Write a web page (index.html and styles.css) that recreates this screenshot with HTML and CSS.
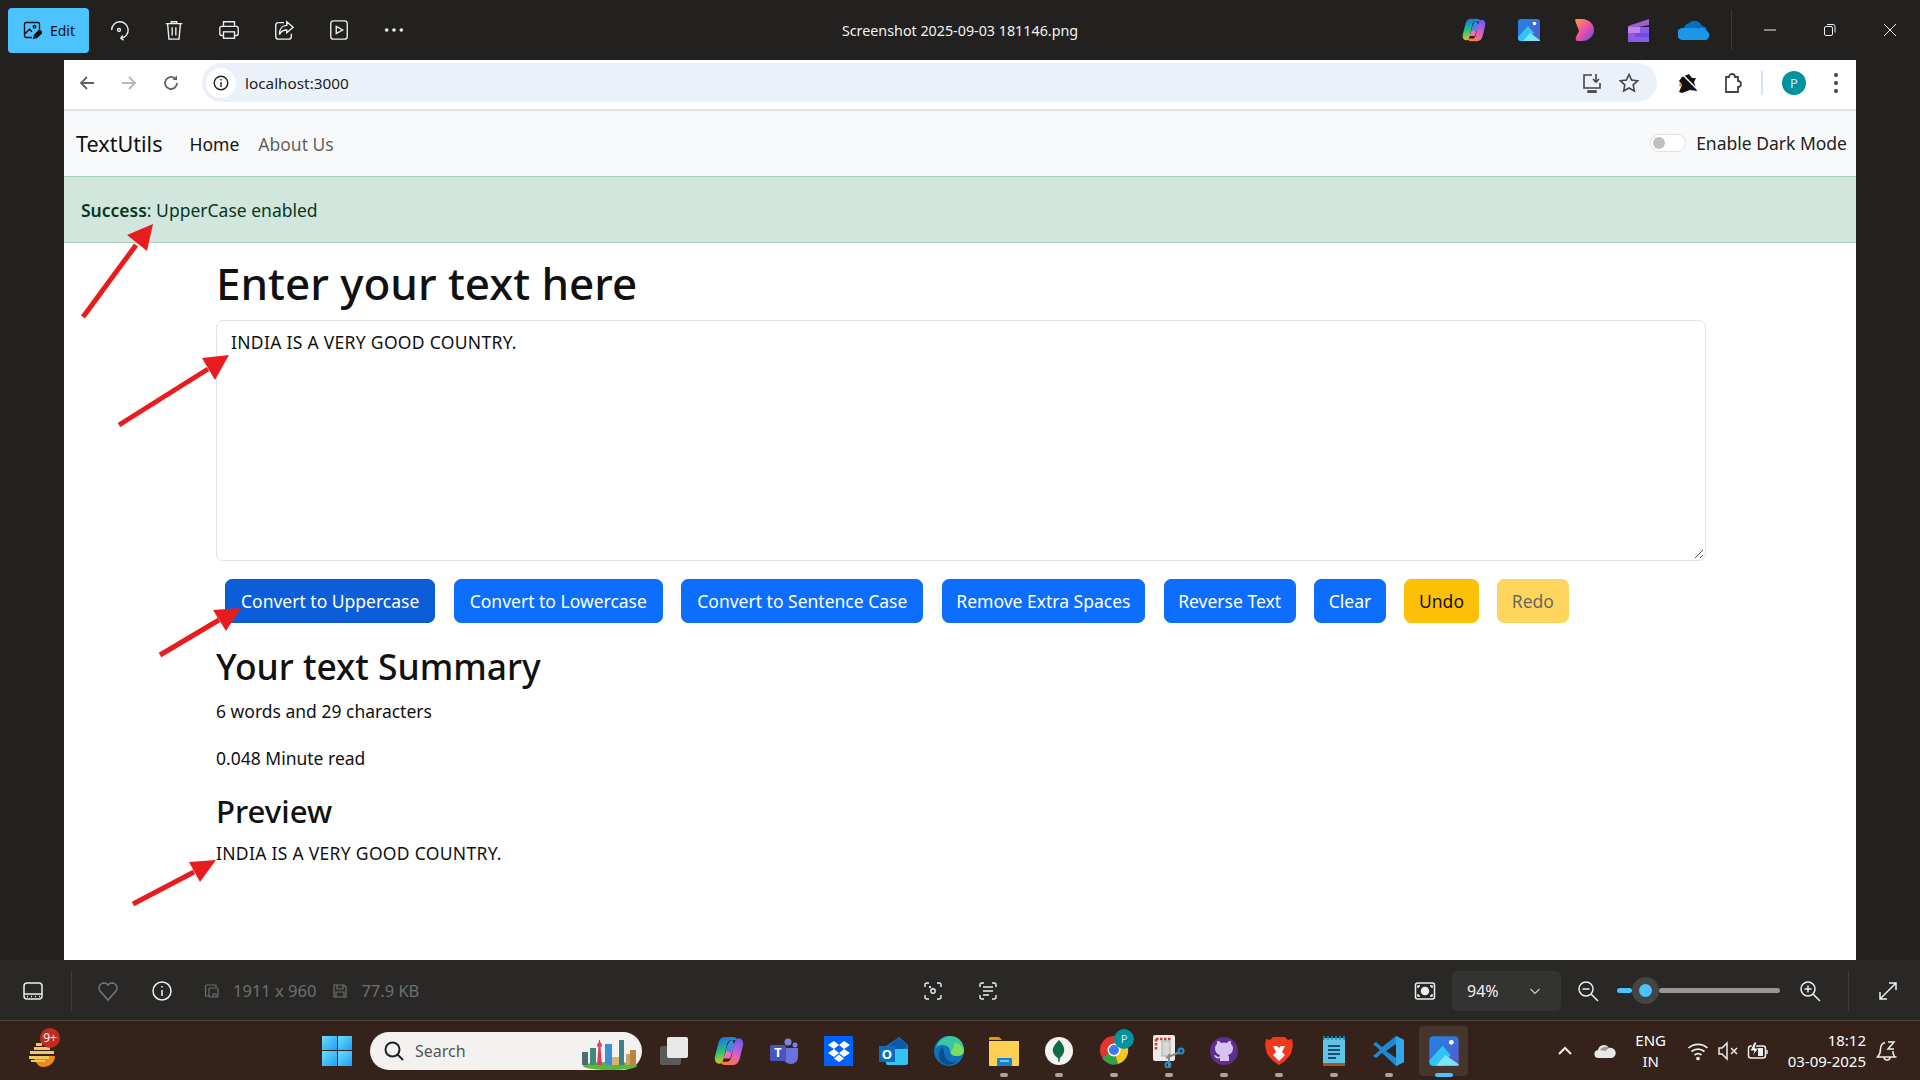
FILE: index.html
```html
<!DOCTYPE html>
<html>

<head>
    <link rel="stylesheet" href="styles.css">
    <title>TextUtils screenshot</title>
</head>

<body>
    <!-- shared icons -->
    <svg class="defs" width="0" height="0">
        <defs>
            <linearGradient id="copilotA" x1="0.3" y1="0" x2="0.5" y2="1">
                <stop offset="0" stop-color="#1b6ff0" />
                <stop offset="0.5" stop-color="#22c27a" />
                <stop offset="1" stop-color="#f7c21a" />
            </linearGradient>
            <linearGradient id="copilotB" x1="0.7" y1="0" x2="0.3" y2="1">
                <stop offset="0" stop-color="#6a5cf0" />
                <stop offset="0.5" stop-color="#d95cd0" />
                <stop offset="1" stop-color="#ff7a3c" />
            </linearGradient>
            <linearGradient id="photoBg" x1="0" y1="0" x2="1" y2="1">
                <stop offset="0" stop-color="#1f86e6" />
                <stop offset="1" stop-color="#5b57c9" />
            </linearGradient>
            <linearGradient id="clipG" x1="0" y1="0" x2="1" y2="1">
                <stop offset="0" stop-color="#ff9a3c" />
                <stop offset="0.5" stop-color="#ee4fa8" />
                <stop offset="1" stop-color="#5a50e8" />
            </linearGradient>
        </defs>
        <symbol id="copilot" viewBox="0 0 28 28">
            <path d="M10 1h8c2 0 3 1 4 3H16c-2 0-3 1-4 4L9 21c-.6 3-2 5-4 5-3 0-5-3-4-7L4 7c1-4 3-6 6-6z" fill="url(#copilotA)" />
            <path d="M18 27h-8c-2 0-3-1-4-3h6c2 0 3-1 4-4l3-13c.6-3 2-5 4-5 3 0 5 3 4 7l-3 12c-1 4-3 6-6 6z" fill="url(#copilotB)" />
            <path d="M13 8h6l-4 13H9z" fill="#f26fb0" />
            <path d="M13 8c1-3 2-4 4-4l2 4-3 8-5-3z" fill="#3a8ae8" />
        </symbol>
        <symbol id="photos" viewBox="0 0 24 24">
            <rect x="1" y="1" width="22" height="22" rx="3" fill="url(#photoBg)" />
            <circle cx="17.500" cy="5.500" r="1.800" fill="#fff" />
            <path d="M1 19 11 8l6 7-6 8H4a3 3 0 0 1-3-3z" fill="#30c5f5" />
            <path d="M6 23l7-8 10 7v1z" fill="#7be3fb" />
        </symbol>
        <symbol id="cloud" viewBox="0 0 32 22">
            <path d="M11 4a8 8 0 0 1 13 3 6 6 0 0 1 5 3l-12 7-11-4a7 7 0 0 1 5-9z" fill="#0b6cc4" />
            <path d="M6 9a6 6 0 0 0-2 12h21a5 5 0 0 0 4-9 6 6 0 0 0-9-2 7 7 0 0 0-6-1c-3 0-6 0-8 0z" fill="#1e96e8" />
        </symbol>
    </svg>

    <div class="window">
        <!-- photos app title bar -->
        <header class="topbar">
            <div class="topbar-left">
                <button class="edit-btn">
                    <svg class="ico20" viewBox="0 0 24 24" fill="none" stroke="#111" stroke-width="1.600">
                        <path d="M12 21H5a2 2 0 0 1-2-2V5a2 2 0 0 1 2-2h14a2 2 0 0 1 2 2v6" />
                        <circle cx="15" cy="8" r="1.500" />
                        <path d="M3 17l6-6 3 3" />
                        <path d="M14 22l1-4 6-6 3 3-6 6z" fill="#111" />
                    </svg>
                    Edit
                </button>
                <span class="tool first">
                    <svg class="ico22" viewBox="0 0 24 24" fill="none" stroke="#eee" stroke-width="1.500">
                        <path d="M4 12a9 9 0 1 1 10 9" />
                        <path d="M17 23l-3-2 2-3" />
                        <circle cx="12" cy="12" r="1.600" />
                    </svg>
                </span>
                <span class="tool">
                    <svg class="ico22" viewBox="0 0 24 24" fill="none" stroke="#eee" stroke-width="1.500">
                        <path d="M3 5h18M9 5V3h6v2M5 5l1.500 17h11L19 5M10 9v9M14 9v9" />
                    </svg>
                </span>
                <span class="tool">
                    <svg class="ico22" viewBox="0 0 24 24" fill="none" stroke="#eee" stroke-width="1.500">
                        <path d="M6 8V3h12v5M6 18H4a2 2 0 0 1-2-2v-6a2 2 0 0 1 2-2h16a2 2 0 0 1 2 2v6a2 2 0 0 1-2 2h-2" />
                        <rect x="6" y="14" width="12" height="7" />
                    </svg>
                </span>
                <span class="tool">
                    <svg class="ico22" viewBox="0 0 24 24" fill="none" stroke="#eee" stroke-width="1.500">
                        <path d="M12 4H6a3 3 0 0 0-3 3v12a3 3 0 0 0 3 3h11a3 3 0 0 0 3-3v-3" />
                        <path d="M15 3l7 6-7 6v-3c-4 0-6 1-8 5 0-6 3-10 8-10z" />
                    </svg>
                </span>
                <span class="tool">
                    <svg class="ico22" viewBox="0 0 24 24" fill="none" stroke="#eee" stroke-width="1.500">
                        <rect x="3" y="2" width="18" height="20" rx="3" />
                        <path d="M9 8l7 4-7 4z" />
                    </svg>
                </span>
                <span class="tool">
                    <svg class="ico22" viewBox="0 0 24 24" fill="#eee">
                        <circle cx="4" cy="12" r="2" />
                        <circle cx="12" cy="12" r="2" />
                        <circle cx="20" cy="12" r="2" />
                    </svg>
                </span>
            </div>
            <div class="file-title">Screenshot 2025-09-03 181146.png</div>
            <div class="topbar-right">
                <span class="app"><svg class="ico24"><use href="#copilot" /></svg></span>
                <span class="app"><svg class="ico24"><use href="#photos" /></svg></span>
                <span class="app">
                    <svg class="ico24" viewBox="0 0 24 24">
                        <path d="M4 1h6c7 0 12 5 12 11s-5 11-12 11H6c-2 0-3-2-2-4l3-6-3-8C3 3 3 1 4 1z" fill="url(#clipG)" />
                    </svg>
                </span>
                <span class="app">
                    <svg class="ico24" viewBox="0 0 24 24">
                        <path d="M1 8 22 1v6L1 11z" fill="#9b5fd8" />
                        <rect x="1" y="9" width="21" height="15" fill="#8a5ae8" />
                        <rect x="1" y="9" width="12" height="6" fill="#c084e8" />
                        <rect x="8" y="15" width="14" height="4" fill="#6a4fe0" />
                    </svg>
                </span>
                <span class="app"><svg class="ico-cloud"><use href="#cloud" /></svg></span>
                <span class="bar-sep"></span>
                <span class="win-ctl">
                    <svg width="14" height="14" viewBox="0 0 14 14" stroke="#eee"><path d="M1 7h12" /></svg>
                </span>
                <span class="win-ctl">
                    <svg width="14" height="14" viewBox="0 0 14 14" fill="none" stroke="#eee"><rect x="1.500" y="3.500" width="8" height="9" rx="1.500" /><path d="M4 1.500h6a2 2 0 0 1 2 2v6" /></svg>
                </span>
                <span class="win-ctl">
                    <svg width="14" height="14" viewBox="0 0 14 14" stroke="#eee"><path d="M1 1l12 12M13 1 1 13" /></svg>
                </span>
            </div>
        </header>

        <main class="viewer">
            <div class="browser">
                <!-- chrome toolbar -->
                <div class="chrome-bar">
                    <span class="nav-ico">
                        <svg class="ico18" viewBox="0 0 18 18" fill="none" stroke="#5f6368" stroke-width="1.800"><path d="M16 9H3M9 3 3 9l6 6" /></svg>
                    </span>
                    <span class="nav-ico">
                        <svg class="ico18" viewBox="0 0 18 18" fill="none" stroke="#b4b6b9" stroke-width="1.800"><path d="M2 9h13M9 3l6 6-6 6" /></svg>
                    </span>
                    <span class="nav-ico">
                        <svg class="ico18" viewBox="0 0 18 18" fill="none" stroke="#5f6368" stroke-width="1.800"><path d="M15 9a6 6 0 1 1-2-4.500" /><path d="M15 1.500V6h-4.500z" fill="#5f6368" stroke="none" /></svg>
                    </span>
                    <div class="omnibox">
                        <span class="site-info">
                            <svg class="ico16" viewBox="0 0 16 16" fill="none" stroke="#222" stroke-width="1.400"><circle cx="8" cy="8" r="6.800" /><path d="M8 7v5M8 4v1.500" /></svg>
                        </span>
                        <span class="url">localhost:3000</span>
                        <span class="omni-right">
                            <svg class="ico22" viewBox="0 0 22 22" fill="none" stroke="#444" stroke-width="1.600"><path d="M11 3H3v13h16v-5M7 20h8" /><path d="M7 19h8v1H7z" /><path d="M15 2v8M12 7l3 3 3-3" /></svg>
                            <svg class="ico22" viewBox="0 0 22 22" fill="none" stroke="#444" stroke-width="1.600"><path d="m11 2.500 2.600 5.500 6 .8-4.400 4.100 1.100 6L11 16l-5.300 2.900 1.100-6L2.400 8.800l6-.8z" /></svg>
                        </span>
                    </div>
                    <span class="ext first-ext">
                        <svg class="ico24" viewBox="0 0 24 24"><path d="M5 6l7-3 3 4 4 0-2 4 3 9-7-1-8 3-3-1 3-7-3-4z" fill="#111" /><path d="M6 4 20 18" stroke="#fff" stroke-width="1.500" /><path d="M2 13l2-2 1 4-2 1z" fill="#f28c28" /></svg>
                    </span>
                    <span class="ext">
                        <svg class="ico22" viewBox="0 0 22 22" fill="none" stroke="#444" stroke-width="1.800"><path d="M5 5h3a3 3 0 0 1 6 0h3v4a3 3 0 0 1 0 6v5H5v-5-10z" /></svg>
                    </span>
                    <span class="chrome-sep"></span>
                    <span class="avatar">P</span>
                    <span class="kebab"><i></i><i></i><i></i></span>
                </div>

                <nav class="navbar">
                    <span class="brand">TextUtils</span>
                    <a class="nav-link active">Home</a>
                    <a class="nav-link">About Us</a>
                    <div class="dark-toggle">
                        <span class="switch"><i></i></span>
                        <span>Enable Dark Mode</span>
                    </div>
                </nav>

                <div class="alert"><strong>Success</strong>: UpperCase enabled</div>

                <section class="container">
                    <h1>Enter your text here</h1>
                    <div class="textbox">
                        <span class="upper">INDIA IS A VERY GOOD COUNTRY.</span>
                        <svg class="grip" width="10" height="10" viewBox="0 0 10 10" stroke="#555"><path d="M1 9 9 1M6 9l3-3" /></svg>
                    </div>
                    <div class="btn-row">
                        <button class="btn btn-hover">Convert to Uppercase</button>
                        <button class="btn">Convert to Lowercase</button>
                        <button class="btn">Convert to Sentence Case</button>
                        <button class="btn tight">Remove Extra Spaces</button>
                        <button class="btn tight">Reverse Text</button>
                        <button class="btn tight">Clear</button>
                        <button class="btn btn-warn tight">Undo</button>
                        <button class="btn btn-warn off tight">Redo</button>
                    </div>
                    <h2>Your text Summary</h2>
                    <p class="stat">6 words and 29 characters</p>
                    <p class="stat read">0.048 Minute read</p>
                    <h3>Preview</h3>
                    <p class="stat upper">INDIA IS A VERY GOOD COUNTRY.</p>
                </section>
            </div>
        </main>

        <!-- photos app status bar -->
        <footer class="infobar">
            <div class="info-left">
                <svg class="ico22 film" viewBox="0 0 22 22" fill="none" stroke="#eee" stroke-width="1.500"><rect x="2" y="3" width="18" height="16" rx="3" /><path d="M2 14h18M5 16.500h1M9 16.500h1M13 16.500h1M17 16.500h1" /></svg>
                <span class="info-sep"></span>
                <svg class="ico22 heart" viewBox="0 0 22 22" fill="none" stroke="#777" stroke-width="1.500"><path d="M11 20 3 11a5 5 0 0 1 8-6 5 5 0 0 1 8 6z" /></svg>
                <svg class="ico22 about" viewBox="0 0 22 22" fill="none" stroke="#eee" stroke-width="1.500"><circle cx="11" cy="11" r="9" /><path d="M11 10v6M11 6v1.500" /></svg>
                <svg class="ico16 dim-ico" viewBox="0 0 16 16" fill="none" stroke="#6f6f6f" stroke-width="1.200"><path d="M12 4V2H3a1.500 1.500 0 0 0-1.500 1.500V13H6" /><rect x="5" y="5" width="9" height="9" rx="1" /><path d="M9 14v-3h3v3" /></svg>
                <span class="meta">1911 x 960</span>
                <svg class="ico16 disk-ico" viewBox="0 0 16 16" fill="none" stroke="#6f6f6f" stroke-width="1.200"><path d="M2 2h10l2 2v10H2z" /><path d="M5 2v4h6V2M4 14V9h8v5" /></svg>
                <span class="meta">77.9 KB</span>
            </div>
            <div class="info-mid">
                <svg class="ico22" viewBox="0 0 22 22" fill="none" stroke="#eee" stroke-width="1.400"><path d="M3 7V5a2 2 0 0 1 2-2h2M15 3h2a2 2 0 0 1 2 2v2M19 15v2a2 2 0 0 1-2 2h-2M7 19H5a2 2 0 0 1-2-2v-2" /><circle cx="11" cy="11" r="2.200" /><path d="M7 7h2M8 6v2" /></svg>
                <svg class="ico22" viewBox="0 0 22 22" fill="none" stroke="#eee" stroke-width="1.400"><path d="M3 7V5a2 2 0 0 1 2-2h2M15 3h2a2 2 0 0 1 2 2v2M19 15v2a2 2 0 0 1-2 2h-2M7 19H5a2 2 0 0 1-2-2v-2" /><path d="M6 7h10M6 11h10M6 15h6" /></svg>
            </div>
            <div class="info-right">
                <svg class="ico22" viewBox="0 0 22 22" fill="none" stroke="#eee" stroke-width="1.500"><rect x="1.500" y="3" width="19" height="16" rx="2" /><circle cx="11" cy="11" r="3.500" fill="#eee" /><path d="M4 8V6h2M16 6h2v2M18 14v2h-2M6 16H4v-2" /></svg>
                <div class="zoom-pick">94%
                    <svg width="12" height="12" viewBox="0 0 12 12" fill="none" stroke="#ccc" stroke-width="1.200"><path d="M1.500 4 6 8.500 10.500 4" /></svg>
                </div>
                <svg class="ico22" viewBox="0 0 22 22" fill="none" stroke="#eee" stroke-width="1.500"><circle cx="9" cy="9" r="7" /><path d="M14 14l7 7M5.500 9h7" /></svg>
                <div class="slider"><span class="fill"></span><span class="knob"><i></i></span><span class="rest"></span></div>
                <svg class="ico22" viewBox="0 0 22 22" fill="none" stroke="#eee" stroke-width="1.500"><circle cx="9" cy="9" r="7" /><path d="M14 14l7 7M5.500 9h7M9 5.500v7" /></svg>
                <span class="info-sep wide"></span>
                <svg class="ico22 expand" viewBox="0 0 22 22" fill="none" stroke="#eee" stroke-width="1.500"><path d="M3 19 19 3M12 3h7v7M3 12v7h7" /></svg>
            </div>
        </footer>

        <div class="taskbar">
            <span class="widget">
                <svg width="34" height="34" viewBox="0 0 34 34">
                    <path d="M9 22h22c0 7-6 11-12 11-5 0-8-5-10-11z" fill="#f08a16" />
                    <path d="M10 13h16v3H10zM6 17h24v3H6zM5 22h20v3H5zM7 26h14v2H7zM12 9h6v3h-6z" fill="#f4c765" />
                </svg>
                <b class="badge">9+</b>
            </span>
            <span class="start">
                <i></i><i></i><i></i><i></i>
            </span>
            <div class="search">
                <svg class="ico22" viewBox="0 0 22 22" fill="none" stroke="#222" stroke-width="2"><circle cx="9.500" cy="9.500" r="7" /><path d="M14.500 14.500 20 20" /></svg>
                <span>Search</span>
                <svg class="skyline" width="58" height="38" viewBox="0 0 58 38">
                    <ellipse cx="30" cy="34" rx="27" ry="4" fill="#5ab738" />
                    <rect x="2" y="20" width="6" height="13" fill="#4d6b78" />
                    <rect x="10" y="16" width="6" height="17" fill="#3e8b78" />
                    <path d="M17 33 19 8h1l2 25z" fill="#d33f6b" />
                    <circle cx="19.500" cy="13" r="2.500" fill="#e0457a" />
                    <rect x="25" y="12" width="7" height="21" fill="#3c8fd8" />
                    <rect x="32" y="25" width="7" height="8" fill="#d8b36a" />
                    <rect x="39" y="8" width="5" height="25" fill="#3e7f8a" />
                    <rect x="46" y="22" width="4" height="11" fill="#c9a36c" />
                    <rect x="50" y="18" width="6" height="15" fill="#b8863c" />
                </svg>
            </div>
            <div class="dock">
                <span class="dock-item">
                    <svg class="ico30" viewBox="0 0 30 30">
                        <rect x="1" y="10" width="21" height="19" rx="2" fill="#5a5a5a" />
                        <rect x="8" y="1" width="21" height="21" rx="2" fill="#e8e8e8" />
                    </svg>
                </span>
                <span class="dock-item"><svg class="ico30"><use href="#copilot" /></svg></span>
                <span class="dock-item">
                    <svg class="ico30" viewBox="0 0 30 30">
                        <circle cx="19" cy="6" r="3.500" fill="#7b83eb" />
                        <circle cx="26" cy="9" r="2.500" fill="#7b83eb" />
                        <path d="M14 12h15v9c0 4-3 7-7 7s-8-3-8-7z" fill="#6b72dd" />
                        <rect x="1" y="9" width="16" height="16" rx="1.500" fill="#4b53bc" />
                        <text class="tile-t" x="9" y="21">T</text>
                    </svg>
                </span>
                <span class="dock-item">
                    <span class="dropbox">
                        <svg width="24" height="24" viewBox="0 0 24 24" fill="#fff">
                            <path d="M7 2 1 6l6 4 5-4zM17 2l-5 4 5 4 6-4zM1 14l6 4 5-4-5-4zM17 10l-5 4 5 4 6-4zM7 19.500l5 3.500 5-3.500-5-4z" />
                        </svg>
                    </span>
                </span>
                <span class="dock-item">
                    <svg class="ico30" viewBox="0 0 30 30">
                        <path d="M7 10 20 1l9 8v5L12 26z" fill="#1173c9" />
                        <path d="M19 2l10 8-10 6-9-6z" fill="#0a5aa8" />
                        <path d="M5 13h24v14a2 2 0 0 1-2 2H9a2 2 0 0 1-2-2z" fill="#33c4f2" />
                        <rect x="0" y="10" width="16" height="16" fill="#0f6cbd" />
                        <text class="tile-t" x="8" y="23">O</text>
                    </svg>
                </span>
                <span class="dock-item">
                    <svg class="ico32" viewBox="0 0 32 32">
                        <circle cx="16" cy="16" r="15" fill="#0f71bd" />
                        <path d="M3 13C5 5 11 1 17 1c8 0 14 6 14 14 0 4-3 6-7 6-5 0-7-2-7-5 0-4-4-6-8-6-3 0-5 1-6 3z" fill="#3ac5a3" />
                        <path d="M22 7c6 2 9 7 9 9 0 3-3 5-7 5-4 0-6-2-6-4 2-3 3-6 4-10z" fill="#7cdb60" />
                        <path d="M11 17c0 7 6 12 13 9-4 4-10 5-14 2C5 25 4 17 9 12c1 1 2 3 2 5z" fill="#0a4f8c" />
                    </svg>
                </span>
                <span class="dock-item running">
                    <svg class="ico32" viewBox="0 0 32 32">
                        <path d="M1 3a1 1 0 0 1 1-1h9l3 3h-13z" fill="#d99a06" />
                        <path d="M1 6h30v24a1 1 0 0 1-1 1H2a1 1 0 0 1-1-1z" fill="#fcd053" />
                        <rect x="9" y="23" width="15" height="8" rx="1" fill="#1b7fd0" />
                        <path d="M12 26h9" stroke="#9ad7ff" stroke-width="1.500" />
                    </svg>
                </span>
                <span class="dock-item running">
                    <svg class="ico30" viewBox="0 0 30 30">
                        <circle cx="15" cy="15" r="14" fill="#f4f3ef" />
                        <path d="M15 4c4 4 6 8 5 12-1 3-3 5-4 6l-.5 4h-1L14 22c-2-1-4-3-5-6-1-4 2-8 6-12z" fill="#0f6a4a" />
                    </svg>
                </span>
                <span class="dock-item running">
                    <svg class="ico32" viewBox="-2 3 32 32">
                        <circle cx="14" cy="18" r="14" fill="#e0362c" />
                        <path d="M14 18 2 26a14 14 0 0 0 16 6z" fill="#2fa24a" />
                        <path d="M14 18l4 14a14 14 0 0 0 8-21H14z" fill="#f8c51c" />
                        <circle cx="14" cy="18" r="6.500" fill="#fff" />
                        <circle cx="14" cy="18" r="5" fill="#3b7ce8" />
                    </svg>
                    <span class="chrome-badge">P</span>
                </span>
                <span class="dock-item running">
                    <svg class="ico34" viewBox="0 0 34 34">
                        <rect x="1" y="1" width="22" height="26" rx="2" fill="#ebebeb" />
                        <path d="M4 5h16M4 5v11" stroke="#cf3b24" stroke-width="2.500" stroke-dasharray="2.500 1.500" fill="none" />
                        <rect x="10" y="7" width="8" height="15" fill="#d8d8d8" stroke="#aaa" />
                        <path d="M17 20v13M14 24l14-6" stroke="#8a8a8a" stroke-width="2" />
                        <circle cx="29" cy="17" r="2.500" fill="none" stroke="#1e90d8" stroke-width="2" />
                        <circle cx="16" cy="31" r="2.500" fill="none" stroke="#1e90d8" stroke-width="2" />
                    </svg>
                </span>
                <span class="dock-item running">
                    <svg class="ico30" viewBox="0 0 30 30">
                        <circle cx="15" cy="15" r="14" fill="#5f2d91" />
                        <path d="M11 25v-3c-3 1-5 0-6-3 2 0 3 2 5 2l1-2c-3-1-5-3-5-7 0-2 1-3 2-4V5c1 0 3 0 4 2a10 10 0 0 1 6 0c1-2 3-2 4-2v3c1 1 2 2 2 4 0 4-2 6-5 7 1 1 1 2 1 3v3z" fill="#d9c2ef" />
                    </svg>
                </span>
                <span class="dock-item running">
                    <svg class="ico30" viewBox="0 0 30 30">
                        <path d="M9 1h12l3 3 4-1 1 6-2 9-6 7-6 4-6-4-6-7-2-9 1-6 4 1z" fill="#f1391f" />
                        <path d="M9 10h4l2 2 2-2h4l-3 6 3 3-6 6-6-6 3-3z" fill="#fff" />
                    </svg>
                </span>
                <span class="dock-item running">
                    <svg class="ico32" viewBox="0 0 32 32">
                        <rect x="5" y="3" width="22" height="27" rx="2" fill="#5fc3e8" />
                        <rect x="5" y="28" width="22" height="3" fill="#a8541e" />
                        <path d="M6 1v4M10 1v4M14 1v4M18 1v4M22 1v4M26 1v4" stroke="#1f8ec4" stroke-width="1.500" />
                        <path d="M10 11h12M10 15h12M10 19h12M10 23h8" stroke="#14506e" stroke-width="2" />
                    </svg>
                </span>
                <span class="dock-item running">
                    <svg class="ico32" viewBox="0 0 32 32">
                        <path d="M23 1l8 4v22l-8 4-14-13-6 5-3-2 7-6-7-6 3-2 6 5z" fill="#1b8ad3" />
                        <path d="M23 1l8 4v22l-8 4z" fill="#31a8ec" />
                        <path d="M23 9 13 16l10 7z" fill="#35221a" />
                    </svg>
                </span>
                <span class="dock-item current">
                    <svg class="ico32"><use href="#photos" /></svg>
                </span>
            </div>
            <div class="tray">
                <svg class="chev" width="16" height="16" viewBox="0 0 16 16" fill="none" stroke="#eee" stroke-width="2"><path d="m2 11 6-6 6 6" /></svg>
                <svg class="tray-cloud" width="22" height="16" viewBox="0 0 22 16"><path d="M5 15a4 4 0 0 1-1-8 6 6 0 0 1 11-2 5 5 0 0 1 3 10z" fill="#e8e8e8" /><path d="M6 7a6 6 0 0 1 9-2l-4 3z" fill="#999" /></svg>
                <div class="lang">ENG<br>IN</div>
                <svg class="ico22 wifi" viewBox="0 0 22 22" fill="none" stroke="#eee" stroke-width="1.700"><path d="M1.500 8a14 14 0 0 1 19 0M4.500 11.500a10 10 0 0 1 13 0M7.500 15a5.500 5.500 0 0 1 7 0" /><circle cx="11" cy="18.500" r="1" fill="#eee" /></svg>
                <svg class="ico22 mute" viewBox="0 0 22 22" fill="none" stroke="#eee" stroke-width="1.500"><path d="M2 8v6h3l5 5V3L5 8zM14 8l6 6M20 8l-6 6" /></svg>
                <svg class="ico22 batt" viewBox="0 0 22 22" fill="none" stroke="#eee" stroke-width="1.500"><rect x="1.500" y="6" width="17" height="12" rx="2.500" /><path d="M20 10v4" /><path d="M7 2 3 11h4l-2 6 7-9H8l2-6z" fill="#eee" stroke="#35221a" stroke-width="1" /><rect x="11" y="8" width="5" height="8" fill="#eee" stroke="none" /></svg>
                <div class="clock">18:12<br>03-09-2025</div>
                <svg class="ico22 bell" viewBox="0 0 22 22" fill="none" stroke="#eee" stroke-width="1.500"><path d="M9 2.500C6 3.500 4.500 6 4.500 9c0 3-1 6-3 8h19M8 17a3 3 0 0 0 6 0M17 11v2l1.500 4" /><path d="M12 2h6l-6 7h6" /></svg>
            </div>
        </div>
    </div>

    <!-- red arrows drawn on top of the screenshot -->
    <svg class="arrows" width="1920" height="1080" viewBox="0 0 1920 1080">
        <g class="arrow">
            <path d="M83 317 136 245" />
            <polygon points="153,224 127,235 147,251" />
        </g>
        <g class="arrow">
            <path d="M119 425 208 369" />
            <polygon points="229,355 202,358 215,380" />
        </g>
        <g class="arrow">
            <path d="M160 655 219 620" />
            <polygon points="241,608 213,610 226,631" />
        </g>
        <g class="arrow">
            <path d="M133 904 194 872" />
            <polygon points="216,860 189,862 200,882" />
        </g>
    </svg>
</body>

</html>
```

FILE: styles.css
```css
* {
    box-sizing: border-box;
}

body {
    margin: 0;
    width: 1920px;
    height: 1080px;
    overflow: hidden;
    position: relative;
    background-color: #22211f;
    font-family: "Noto Sans", "Open Sans", sans-serif;
}

.defs {
    position: absolute;
}

.window {
    display: flex;
    flex-direction: column;
    height: 1080px;
}

svg {
    display: block;
    flex: none;
}

.ico16 { width: 16px; height: 16px; }
.ico18 { width: 18px; height: 18px; }
.ico20 { width: 20px; height: 20px; }
.ico22 { width: 22px; height: 22px; }
.ico24 { width: 24px; height: 24px; }
.ico30 { width: 30px; height: 30px; }
.ico32 { width: 32px; height: 32px; }
.ico34 { width: 34px; height: 34px; }
.ico-cloud { width: 32px; height: 22px; }

/* title bar */
.topbar {
    height: 60px;
    display: grid;
    grid-template-columns: 1fr auto 1fr;
    align-items: center;
    background-color: #22211f;
    color: #f2f2f2;
}

.topbar-left {
    display: flex;
    align-items: center;
    padding-left: 8px;
}

.edit-btn {
    width: 81px;
    height: 45px;
    display: flex;
    align-items: center;
    justify-content: center;
    gap: 8px;
    border: 0;
    border-radius: 4px;
    background-color: #4cc2ff;
    color: #111;
    font-family: inherit;
    font-size: 14px;
}

.tool {
    width: 55px;
    display: flex;
    justify-content: center;
}

.tool.first {
    margin-left: 2px;
}

.file-title {
    font-size: 14.300px;
}

.topbar-right {
    display: flex;
    align-items: center;
    justify-content: flex-end;
}

.app {
    width: 55px;
    display: flex;
    justify-content: center;
}

.bar-sep {
    width: 1px;
    height: 40px;
    margin: 0 8px 0 10px;
    background-color: #3c3b39;
}

.win-ctl {
    width: 60px;
    display: flex;
    justify-content: center;
}

/* page shown in the viewer */
.viewer {
    height: 900px;
    padding: 0 64px;
}

.browser {
    height: 100%;
    background-color: white;
    display: flex;
    flex-direction: column;
}

.chrome-bar {
    height: 51px;
    flex: none;
    display: flex;
    align-items: center;
    padding: 0 0 4px 2px;
    border-bottom: 2px solid #e2e2e2;
}

.nav-ico {
    width: 42px;
    display: flex;
    justify-content: center;
}

.omnibox {
    width: 1455px;
    height: 39px;
    margin-left: 10px;
    display: flex;
    align-items: center;
    padding-left: 4px;
    border-radius: 20px;
    background-color: #ecf1f9;
}

.site-info {
    width: 30px;
    height: 30px;
    display: flex;
    align-items: center;
    justify-content: center;
    border-radius: 50%;
    background-color: white;
}

.url {
    margin-left: 9px;
    font-size: 15.300px;
    color: #222;
}

.omni-right {
    margin-left: auto;
    margin-right: 17px;
    display: flex;
    gap: 15px;
}

.ext {
    width: 43px;
    display: flex;
    justify-content: center;
}

.first-ext {
    margin-left: 10px;
}

.chrome-sep {
    width: 2px;
    height: 24px;
    margin: 0 19px 0 8px;
    background-color: #d3e3fd;
}

.avatar {
    width: 24px;
    height: 24px;
    border-radius: 50%;
    background-color: #00929f;
    color: #cfeef0;
    display: flex;
    align-items: center;
    justify-content: center;
    font-size: 13px;
}

.kebab {
    margin-left: 28px;
    display: flex;
    flex-direction: column;
    gap: 4px;
}

.kebab i {
    width: 4px;
    height: 4px;
    border-radius: 50%;
    background-color: #444;
}

.navbar {
    height: 65px;
    flex: none;
    display: flex;
    align-items: center;
    padding: 0 9px 0 12px;
    background-color: #f8f9fa;
}

.brand {
    font-size: 21.600px;
    color: #111;
    margin-right: 27px;
}

.nav-link {
    font-size: 17.500px;
    color: rgba(0, 0, 0, 0.65);
    margin-right: 19px;
}

.nav-link.active {
    color: #111;
}

.dark-toggle {
    margin-left: auto;
    display: flex;
    align-items: center;
    gap: 10px;
    padding-bottom: 2px;
    font-size: 17.500px;
    color: #222;
}

.switch {
    width: 36px;
    height: 18px;
    padding: 2px;
    border: 1px solid #dee2e6;
    border-radius: 10px;
    background-color: white;
}

.switch i {
    display: block;
    width: 12px;
    height: 12px;
    border-radius: 50%;
    background-color: #bfbfbf;
}

.alert {
    height: 67px;
    flex: none;
    display: flex;
    align-items: center;
    white-space: pre;
    padding-left: 17px;
    border: 1px solid #a3cfbb;
    border-width: 1px 0;
    background-color: #d1e7dd;
    color: #0a3622;
    font-size: 17.500px;
}

.alert strong {
    font-weight: 600;
}

.container {
    padding: 12px 150px 0 152px;
    color: #111;
}

h1 {
    margin: 0 0 8px;
    font-size: 44px;
    line-height: 57px;
    font-weight: 500;
}

.textbox {
    position: relative;
    height: 241px;
    padding: 7px 14px;
    border: 1px solid #dee2e6;
    border-radius: 7px;
    font-size: 17.500px;
    line-height: 28px;
}

.upper {
    letter-spacing: 0.3px;
}

.grip {
    position: absolute;
    right: 1px;
    bottom: 1px;
}

.btn-row {
    display: flex;
    gap: 18.400px;
    margin: 18px 0 0 9px;
}

.btn {
    height: 44px;
    padding: 0 15px;
    border: 1px solid #0d6efd;
    border-radius: 7px;
    background-color: #0d6efd;
    color: white;
    font-family: inherit;
    font-size: 17.500px;
}

.btn.tight {
    padding: 0 13.700px;
}

.btn-hover {
    background-color: #0b5ed7;
    border-color: #0a58ca;
}

.btn-warn {
    background-color: #ffc107;
    border-color: #ffc107;
    color: #111;
}

.btn-warn.off {
    opacity: 0.65;
}

h2 {
    margin: 19px 0 0;
    font-size: 35.400px;
    line-height: 48px;
    font-weight: 500;
}

.stat {
    margin: 7px 0 0;
    font-size: 17.500px;
    line-height: 28px;
}

.stat.read {
    margin-top: 19px;
}

h3 {
    margin: 18px 0 0;
    font-size: 31.200px;
    line-height: 42px;
    font-weight: 500;
}

h3 + .stat {
    margin-top: 7px;
}

/* status bar */
.infobar {
    height: 61px;
    display: grid;
    grid-template-columns: 1fr auto 1fr;
    align-items: center;
    padding-top: 1px;
    border-bottom: 1px solid #4a403a;
    background-color: #292827;
    color: #f2f2f2;
}

.info-left,
.info-mid,
.info-right {
    display: flex;
    align-items: center;
}

.film {
    margin-left: 22px;
}

.info-sep {
    width: 1px;
    height: 40px;
    margin: 0 25px 0 27px;
    background-color: #3d3c3a;
}

.about {
    margin-left: 32px;
}

.dim-ico {
    margin-left: 31px;
}

.meta {
    margin-left: 13px;
    font-size: 16.500px;
    color: #6f6f6f;
}

.disk-ico {
    margin-left: 16px;
}

.disk-ico + .meta {
    margin-left: 13px;
}

.info-mid {
    gap: 33px;
}

.info-right {
    justify-content: flex-end;
}

.zoom-pick {
    width: 109px;
    height: 40px;
    margin: 0 16px 0 16px;
    display: flex;
    align-items: center;
    justify-content: space-between;
    padding: 0 20px 0 15px;
    border-radius: 5px;
    background-color: #333332;
    font-size: 16px;
}

.slider {
    position: relative;
    width: 163px;
    height: 5px;
    margin: 0 19px 0 18px;
    display: flex;
    align-items: center;
}

.slider .fill {
    width: 15px;
    height: 5px;
    border-radius: 3px;
    background-color: #4cc2ff;
}

.slider .rest {
    flex: 1;
    height: 5px;
    border-radius: 3px;
    background-color: #999794;
}

.slider .knob {
    width: 27px;
    height: 27px;
    flex: none;
    display: flex;
    align-items: center;
    justify-content: center;
    border-radius: 50%;
    background-color: #454545;
}

.knob i {
    width: 13px;
    height: 13px;
    border-radius: 50%;
    background-color: #4cc2ff;
}

.info-sep.wide {
    margin: 0 28px 0 27px;
}

.expand {
    margin-right: 21px;
}

/* windows taskbar */
.taskbar {
    height: 59px;
    display: flex;
    align-items: center;
    background-color: #35221a;
    color: white;
}

.widget {
    position: relative;
    width: 34px;
    margin-left: 24px;
}

.badge {
    position: absolute;
    top: -6px;
    left: 16px;
    width: 20px;
    height: 20px;
    border-radius: 50%;
    background-color: #c42b1c;
    font-size: 12px;
    font-weight: 400;
    line-height: 20px;
    text-align: center;
}

.start {
    width: 30px;
    height: 30px;
    margin-left: 264px;
    display: grid;
    grid-template-columns: 1fr 1fr;
    gap: 1px;
}

.start i {
    background: linear-gradient(135deg, #6fdcff, #1aa0f2);
}

.search {
    width: 272px;
    height: 38px;
    margin-left: 18px;
    display: flex;
    align-items: center;
    gap: 10px;
    padding-left: 13px;
    border-radius: 19px;
    background-color: #f3f2f0;
    color: #555;
    font-size: 16px;
}

.skyline {
    margin-left: auto;
    margin-right: 4px;
}

.dock {
    display: flex;
    margin-left: 4px;
}

.dock-item {
    position: relative;
    width: 55px;
    height: 50px;
    display: flex;
    align-items: center;
    justify-content: center;
    border-radius: 4px;
}

.dock-item.running::after,
.dock-item.current::after {
    content: "";
    position: absolute;
    bottom: -1px;
    left: 50%;
    width: 8px;
    height: 4px;
    margin-left: -4px;
    border-radius: 2px;
    background-color: #a8a5a2;
}

.dock-item.current {
    width: 49px;
    margin-left: 3px;
    background-color: #46352d;
}

.dock-item.current::after {
    width: 18px;
    margin-left: -9px;
    background-color: #4cc2ff;
}

.dropbox {
    width: 29px;
    height: 30px;
    display: flex;
    align-items: center;
    justify-content: center;
    background-color: #0061fe;
}

.tile-t {
    fill: white;
    font-family: "Noto Sans", sans-serif;
    font-size: 13px;
    font-weight: 700;
    text-anchor: middle;
}

.chrome-badge {
    position: absolute;
    top: 3px;
    right: 7px;
    width: 20px;
    height: 20px;
    border-radius: 50%;
    background-color: #00929f;
    color: #cfeef0;
    font-size: 11px;
    line-height: 20px;
    text-align: center;
}

.tray {
    margin-left: auto;
    display: flex;
    align-items: center;
    font-size: 15px;
    padding-right: 22px;
}

.lang {
    width: 40px;
    margin-left: 15px;
    line-height: 21px;
    text-align: center;
}

.tray-cloud {
    margin-left: 21px;
}

.wifi {
    margin-left: 16px;
}

.mute {
    margin-left: 8px;
}

.batt {
    margin-left: 8px;
}

.clock {
    margin-left: 19px;
    line-height: 21px;
    text-align: right;
}

.bell {
    margin-left: 10px;
}

/* annotations */
.arrows {
    position: absolute;
    top: 0;
    left: 0;
    pointer-events: none;
}

.arrow path {
    stroke: #e81c1f;
    stroke-width: 5;
    fill: none;
}

.arrow polygon {
    fill: #e81c1f;
}
```
